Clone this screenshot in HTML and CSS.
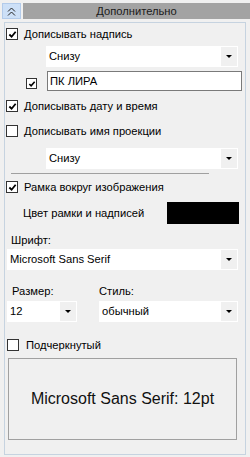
FILE: index.html
```html
<!DOCTYPE html>
<html>
<head>
<meta charset="utf-8">
<link rel="stylesheet" href="styles.css">
</head>
<body>
<div class="hdr">
  <div class="hbtn">
    <svg width="9" height="9" viewBox="0 0 9 9"><polyline points="1,4.5 4.5,1 8,4.5" fill="none" stroke="#222" stroke-width="1"/><polyline points="1,8.5 4.5,5 8,8.5" fill="none" stroke="#222" stroke-width="1"/></svg>
  </div>
  <div class="hbar">Дополнительно</div>
</div>
<div class="panel">
  <div class="row r-text">
    <span class="cb"><svg viewBox="0 0 10 10"><polyline points="1.5,5 4,7.5 8.5,2" fill="none" stroke="#000" stroke-width="2"/></svg></span>
    <span class="lbl">Дописывать надпись</span>
  </div>
  <div class="combo c-pos1"><span class="val">Снизу</span><span class="dd"><span class="arr"></span></span></div>
  <div class="txtrow">
    <span class="cb small"><svg viewBox="0 0 9 9"><polyline points="1.5,4.5 3.5,6.5 7.5,2" fill="none" stroke="#000" stroke-width="1.8"/></svg></span>
    <div class="tbox">ПК ЛИРА</div>
  </div>
  <div class="row r-date">
    <span class="cb"><svg viewBox="0 0 10 10"><polyline points="1.5,5 4,7.5 8.5,2" fill="none" stroke="#000" stroke-width="2"/></svg></span>
    <span class="lbl">Дописывать дату и время</span>
  </div>
  <div class="row r-proj">
    <span class="cb"></span>
    <span class="lbl">Дописывать имя проекции</span>
  </div>
  <div class="combo c-pos2"><span class="val">Снизу</span><span class="dd"><span class="arr"></span></span></div>
  <div class="sep"></div>
  <div class="row r-frame">
    <span class="cb"><svg viewBox="0 0 10 10"><polyline points="1.5,5 4,7.5 8.5,2" fill="none" stroke="#000" stroke-width="2"/></svg></span>
    <span class="lbl">Рамка вокруг изображения</span>
  </div>
  <div class="colorrow">
    <span class="clbl">Цвет рамки и надписей</span>
    <span class="swatch"></span>
  </div>
  <div class="flabel">Шрифт:</div>
  <div class="combo c-font"><span class="val">Microsoft Sans Serif</span><span class="dd"><span class="arr"></span></span></div>
  <div class="lblrow">
    <span class="l-size">Размер:</span>
    <span class="l-style">Стиль:</span>
  </div>
  <div class="sizerow">
    <div class="combo c-size"><span class="val">12</span><span class="dd"><span class="arr"></span></span></div>
    <div class="combo c-style"><span class="val">обычный</span><span class="dd"><span class="arr"></span></span></div>
  </div>
  <div class="row r-under">
    <span class="cb"></span>
    <span class="lbl">Подчеркнутый</span>
  </div>
  <div class="preview">Microsoft Sans Serif: 12pt</div>
</div>
</body>
</html>
```
FILE: styles.css
```css
html, body {
  margin: 0;
  padding: 0;
}
body {
  background: #f0f0f0;
  font-family: "Liberation Sans", Arial, sans-serif;
  font-size: 11.2px;
  color: #000;
  width: 250px;
  height: 457px;
  overflow: hidden;
}
.hdr {
  display: flex;
  margin-top: 3px;
  height: 16px;
  padding-left: 2px;
  gap: 2px;
}
.hbtn {
  width: 19px;
  box-sizing: border-box;
  background: #cde0f7;
  border: 1px solid #b3cbea;
  display: flex;
  align-items: center;
  justify-content: center;
}
.hbtn svg { display: block; }
.hbar {
  flex: 1;
  background: #a3a3a3;
  display: flex;
  align-items: center;
  justify-content: center;
  color: #1a1a1a;
  line-height: 16px;
}
.panel {
  margin: 3px 0 0 4px;
  width: 242px;
  height: 433px;
  box-sizing: border-box;
  border: 1px solid #c6d3e0;
  display: flex;
  flex-direction: column;
  align-items: flex-start;
}
.row {
  display: flex;
  align-items: center;
  height: 12px;
  margin-left: 1px;
}
.cb {
  width: 12px;
  height: 12px;
  box-sizing: border-box;
  border: 1px solid #333;
  background: #fff;
  display: flex;
  align-items: center;
  justify-content: center;
  flex: none;
}
.cb svg { width: 9px; height: 9px; display: block; }
.cb.small { width: 11px; height: 11px; }
.cb.small svg { width: 8px; height: 8px; }
.lbl { margin-left: 6px; line-height: 12px; white-space: nowrap; }
.r-text { margin-top: 5px; }
.r-date { margin-top: 9px; }
.r-proj { margin-top: 13px; }
.r-frame { margin-top: 7px; }
.r-under { margin-top: 17px; margin-left: 2px; }
.r-under .lbl { margin-left: 7px; }

.combo {
  display: flex;
  height: 21px;
  background: #fff;
  box-sizing: border-box;
  align-items: stretch;
}
.combo .val {
  flex: 1;
  padding-left: 3px;
  line-height: 21px;
  white-space: nowrap;
  overflow: hidden;
}
.combo .dd {
  width: 16px;
  margin: 1px 1px 1px 0;
  background: #f0f0f0;
  display: flex;
  align-items: center;
  justify-content: center;
}
.arr {
  width: 0;
  height: 0;
  border-left: 3px solid transparent;
  border-right: 3px solid transparent;
  border-top: 3px solid #000;
}
.c-pos1 { margin-top: 6px; margin-left: 41px; width: 192px; }
.c-pos2 { margin-top: 11px; margin-left: 41px; width: 192px; }
.c-font { margin-top: 2px; margin-left: 2px; width: 231px; }

.txtrow {
  display: flex;
  align-items: flex-start;
  margin-top: 4px;
  height: 20px;
}
.txtrow .cb { margin-left: 21px; margin-top: 7px; }
.tbox {
  margin-left: 10px;
  width: 195px;
  height: 20px;
  box-sizing: border-box;
  border: 1px solid #7a7a7a;
  background: #fff;
  padding-left: 2px;
  line-height: 18px;
}
.sep {
  margin-top: 4px;
  margin-left: 6px;
  width: 198px;
  height: 1px;
  background: #a0a0a0;
}
.colorrow {
  margin-top: 9px;
  height: 22px;
  width: 240px;
  box-sizing: border-box;
  padding: 0 6px 0 18px;
  display: flex;
  align-items: center;
  justify-content: space-between;
}
.swatch {
  width: 72px;
  height: 22px;
  background: #000;
}
.flabel {
  margin-top: 10px;
  margin-left: 6px;
  line-height: 13px;
}
.lblrow {
  margin-top: 15px;
  display: flex;
  line-height: 13px;
}
.l-size { margin-left: 7px; width: 87px; }
.sizerow {
  margin-top: 3px;
  display: flex;
  margin-left: 2px;
  gap: 22px;
}
.c-size { width: 70px; }
.c-style { width: 139px; }
.preview {
  margin-top: 7px;
  margin-left: 3px;
  width: 229px;
  height: 82px;
  box-sizing: border-box;
  border: 1px solid #a0a0a0;
  display: flex;
  align-items: center;
  justify-content: center;
  font-size: 16px;
  color: #111;
}
```
